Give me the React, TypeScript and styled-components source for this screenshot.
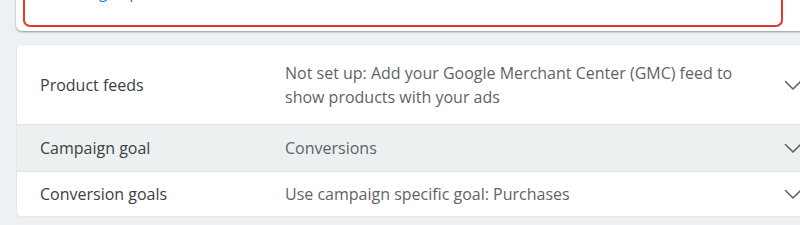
import styled, { createGlobalStyle } from 'styled-components';

const GlobalStyle = createGlobalStyle`
  html, body {
    margin: 0;
    padding: 0;
    background: #eef1f4;
    overflow: hidden;
  }
  body {
    font-family: 'Open Sans', Roboto, 'Liberation Sans', sans-serif;
  }
`;

type Row = {
  label: string;
  value: string;
  muted?: boolean;
};

const rows: Row[] = [
  {
    label: 'Product feeds',
    value:
      'Not set up: Add your Google Merchant Center (GMC) feed to show products with your ads',
  },
  { label: 'Campaign goal', value: 'Conversions', muted: true },
  { label: 'Conversion goals', value: 'Use campaign specific goal: Purchases' },
];

const ChevronIcon = () => (
  <svg width='18' height='18' viewBox='0 0 18 18' fill='none'>
    <path
      d='M1.5 5.5l7.5 7.5 7.5-7.5'
      stroke='#5f6368'
      strokeWidth='1.6'
      strokeLinecap='round'
      strokeLinejoin='round'
    />
  </svg>
);

export default function App() {
  return (
    <>
      <GlobalStyle />
      <Page>
        <TopCard>
          <AlertBox>
            <AlertLink>Sign up</AlertLink>
          </AlertBox>
        </TopCard>
        <SettingsCard>
          {rows.map((row) => (
            <SettingRow key={row.label} $muted={row.muted}>
              <Label>{row.label}</Label>
              <Value>{row.value}</Value>
              <Toggle>
                <ChevronIcon />
              </Toggle>
            </SettingRow>
          ))}
        </SettingsCard>
      </Page>
    </>
  );
}

const Page = styled.div`
  width: 830px;
  padding-left: 16px;
  display: flex;
  flex-direction: column;
  gap: 13px;
`;

const TopCard = styled.div`
  margin-top: -53px;
  background: #ffffff;
  padding: 0 0 4px 7px;
  border-radius: 0 0 0 6px;
  box-shadow: 0 1px 2px rgba(60, 64, 67, 0.4), 0 1px 3px rgba(60, 64, 67, 0.15);
`;

const AlertBox = styled.div`
  width: 760px;
  height: 80px;
  border: 2px solid #e8352a;
  border-top: none;
  border-radius: 0 0 7px 7px;
  padding-left: 62px;
  box-sizing: border-box;
`;

const AlertLink = styled.span`
  display: inline-block;
  margin-top: 35px;
  color: #1a73e8;
  font-size: 15px;
  line-height: 20px;
`;

const SettingsCard = styled.div`
  background: #ffffff;
  border: 1px solid #e3e6ea;
  border-radius: 6px 0 0 6px;
  overflow: hidden;
`;

const SettingRow = styled.div<{ $muted?: boolean }>`
  display: grid;
  grid-template-columns: 245px 470px 1fr;
  align-items: center;
  padding: 0 0 0 23px;
  min-height: 46px;
  background: ${({ $muted }) => ($muted ? '#edf0f0' : '#ffffff')};
  border-top: 1px solid #e0e3e3;

  &:first-child {
    border-top: none;
    min-height: 79px;
  }

  &:last-child {
    min-height: 44px;
  }
`;

const Label = styled.div`
  color: #3c4043;
  font-size: 16px;
  line-height: 24px;
`;

const Value = styled.div`
  color: #5f6368;
  font-size: 16px;
  line-height: 24px;
  padding-right: 10px;
`;

const Toggle = styled.div`
  display: flex;
  align-items: center;
  padding-left: 29px;
`;
